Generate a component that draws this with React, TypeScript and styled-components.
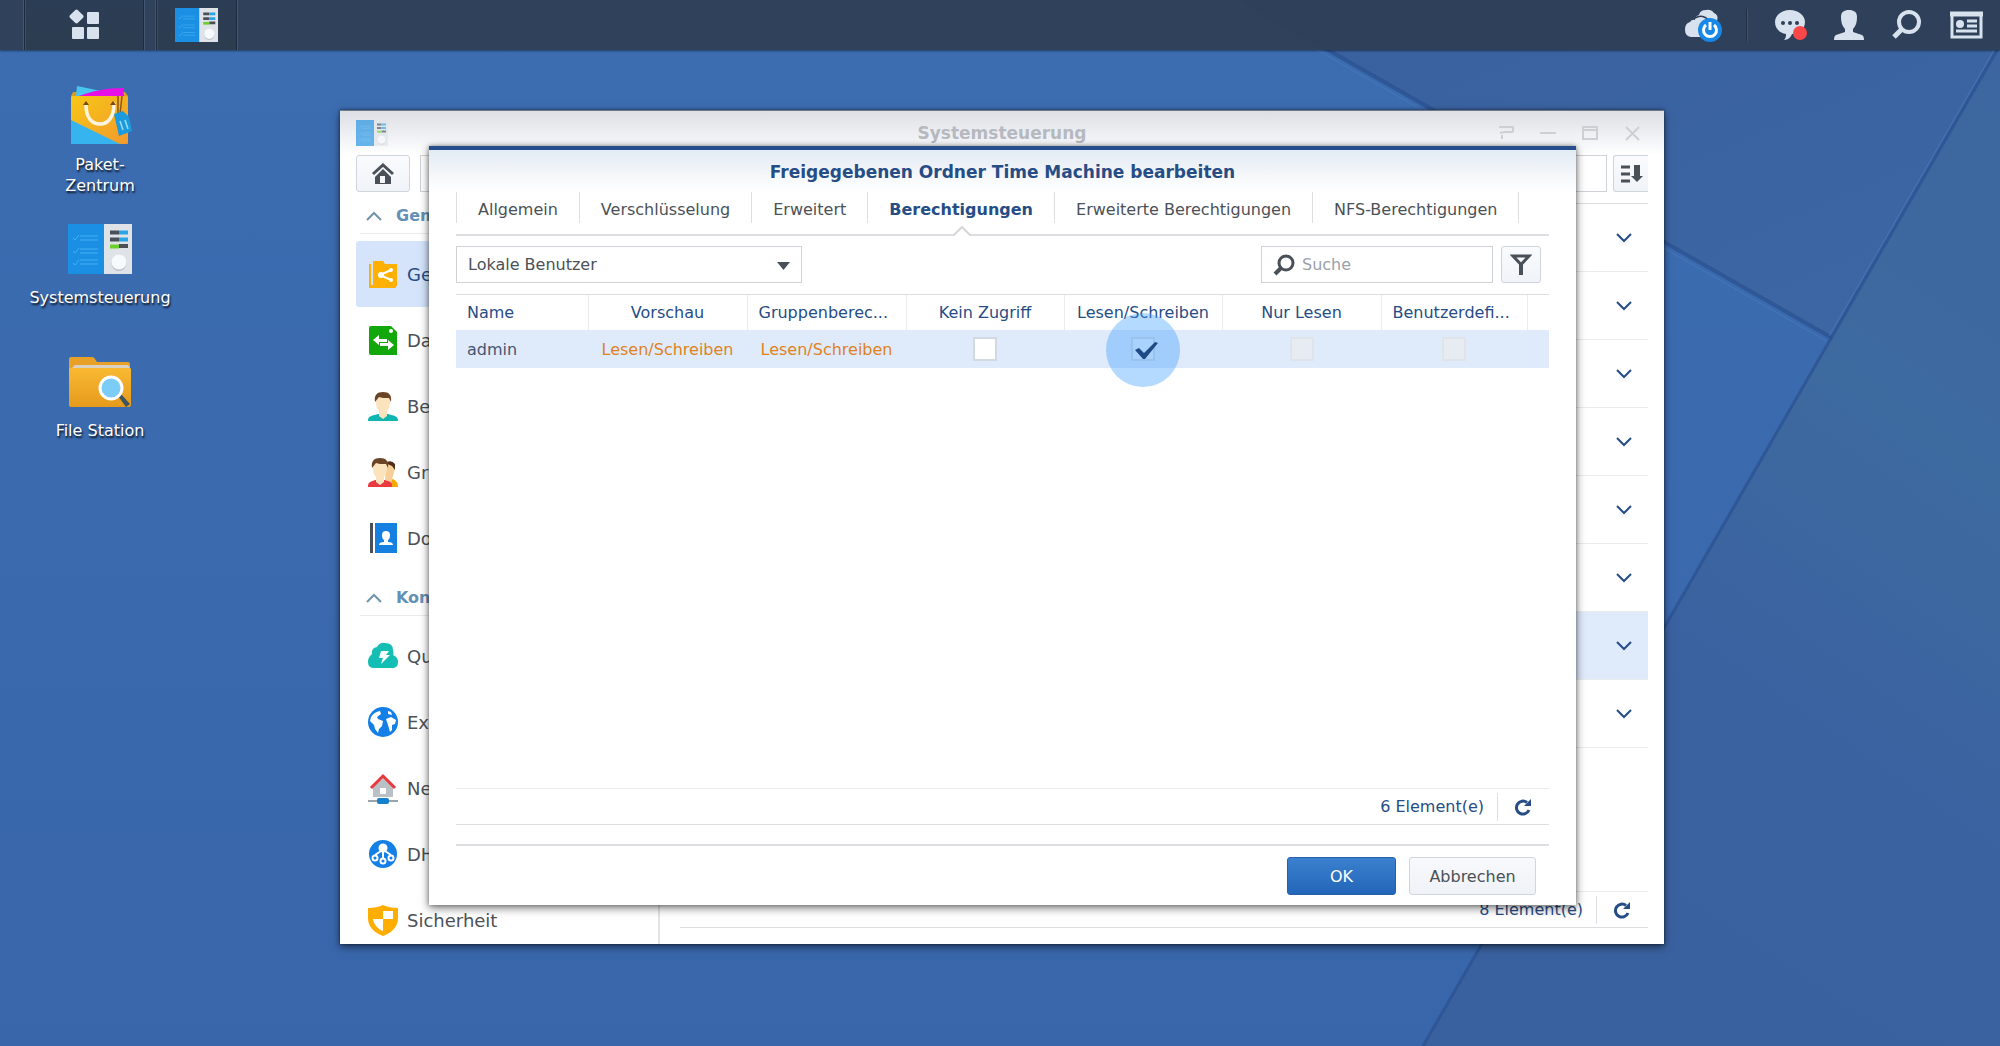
import React from "react";
import styled, { createGlobalStyle, css } from "styled-components";

const color = {
  navy: "#264d85",
  text: "#4b5157",
  line: "#dcdee1",
  softLine: "#e9ebee",
  select: "#dfeafb",
  orange: "#e0821e",
  ink: "#4a5058",
  tray: "#d8e1ee",
};

const GlobalStyle = createGlobalStyle`
  * { box-sizing: border-box; }
  html, body, #root { height: 100%; }
  body {
    margin: 0;
    overflow: hidden;
    font: 16px/21px "DejaVu Sans", Verdana, sans-serif;
    color: ${color.text};
  }
  button, input, select { font: inherit; color: inherit; margin: 0; }
  ul { list-style: none; margin: 0; padding: 0; }
  h1, h2, h3 { margin: 0; font-size: inherit; }
  svg { display: block; flex: none; }
`;

/* ---------- desktop ---------- */

const Desktop = styled.div`
  position: relative;
  display: flex;
  flex-direction: column;
  height: 100%;
  min-height: 800px;
  overflow: hidden;
  background: #3b6bb0;
`;

const WallpaperSvg = styled.svg`
  position: absolute;
  inset: 0;
  width: 100%;
  height: 100%;
`;

const Taskbar = styled.header`
  position: relative;
  display: flex;
  justify-content: space-between;
  height: 50px;
  background: rgba(46, 64, 88, 0.97);
  box-shadow: 0 1px 2px rgba(0, 0, 0, 0.45);
`;

const TaskGroup = styled.div`
  display: flex;
  gap: 12px;
  padding-left: 24px;
`;

const TaskButton = styled.button<{ $width: number }>`
  display: flex;
  align-items: center;
  justify-content: center;
  width: ${(p) => p.$width}px;
  padding: 0;
  border: solid #1c2b3d;
  border-width: 0 1px;
  background: linear-gradient(#2b3d55, #2d3d50);
  box-shadow: -1px 0 0 #42566f, 1px 0 0 #42566f, inset 1px 0 0 #3a4d66;
`;

const Tray = styled.div`
  display: flex;
  align-items: center;
  gap: 27px;
  padding-right: 17px;
`;

const TrayButton = styled.button`
  display: flex;
  align-items: center;
  padding: 0;
  border: 0;
  background: none;
`;

const TrayDivider = styled.span`
  width: 2px;
  height: 32px;
  border-left: 1px solid #1f2e42;
  border-right: 1px solid #42566f;
  margin-left: -4px;
`;

const Shortcuts = styled.nav`
  position: relative;
  display: grid;
  grid-auto-rows: 133px;
  width: 200px;
  padding-top: 34px;
`;

const Shortcut = styled.a`
  display: flex;
  flex-direction: column;
  align-items: center;
  gap: 6px;
  color: #fff;
  text-align: center;
  text-decoration: none;
  text-shadow: 1px 2px 2px rgba(0, 0, 0, 0.85);
`;

const ShortcutIcon = styled.span`
  display: flex;
  align-items: center;
  height: 64px;
`;

const ShortcutLabel = styled.span`
  white-space: pre-line;
`;

/* ---------- control panel window ---------- */

const Window = styled.main`
  position: absolute;
  top: 110px;
  bottom: 102px;
  left: 17%;
  width: 66.2%;
  min-width: 1250px;
  display: flex;
  flex-direction: column;
  background: #fff;
  border-top: 1px solid #70798a;
  box-shadow: 0 3px 8px rgba(0, 0, 0, 0.5), 0 0 3px rgba(0, 0, 0, 0.5);
`;

const TitleBar = styled.div`
  display: grid;
  grid-template-columns: 1fr auto 1fr;
  align-items: center;
  height: 44px;
  padding: 0 16px;
  background: linear-gradient(#dddfe4, #f1f2f6 60%, #fff);
`;

const WindowTitle = styled.h1`
  font-size: 17px;
  color: #b6b9bf;
`;

const WindowControls = styled.div`
  display: flex;
  justify-content: flex-end;
  gap: 22px;
  padding-right: 6px;
`;

const PlainButton = styled.button`
  display: flex;
  align-items: center;
  justify-content: center;
  padding: 0;
  border: 0;
  background: none;
`;

const WindowToolbar = styled.div`
  display: flex;
  height: 37px;
  padding: 0 16px;
`;

const toolButton = css`
  display: flex;
  align-items: center;
  justify-content: center;
  padding: 0;
  border: 1px solid #cfd5dd;
  border-radius: 3px;
  background: linear-gradient(#fafbfd, #f0f3f8);
`;

const HomeButton = styled.button`
  ${toolButton}
  width: 54px;
  margin-right: 10px;
`;

const SortButton = styled.button`
  ${toolButton}
  width: 35px;
  margin-left: 6px;
  border-right: 0;
  border-radius: 3px 0 0 3px;
`;

const WideSearch = styled.input`
  flex: 1;
  min-width: 0;
  padding: 0 12px;
  border: 1px solid #cfd2d7;
  background: #fff;
`;

const WindowBody = styled.div`
  display: grid;
  grid-template-columns: 304px 1fr;
  flex: 1;
  min-height: 0;
  margin-top: 6px;
  padding: 0 16px;
`;

const Sidebar = styled.nav`
  overflow: hidden;
  border-right: 2px solid #e2e3e6;
`;

const SideGroup = styled.section`
  margin-bottom: 9px;
`;

const SideHeading = styled.h2`
  display: flex;
  align-items: center;
  gap: 14px;
  height: 36px;
  margin: 0 12px 7px 4px;
  padding-left: 6px;
  border-bottom: 1px solid ${color.softLine};
  color: #6391b5;
`;

const SideLink = styled.a<{ $active?: boolean }>`
  display: flex;
  align-items: center;
  gap: 8px;
  height: 66px;
  padding-left: 11px;
  border-radius: 3px;
  font-size: 18px;
  text-decoration: none;
  color: ${(p) => (p.$active ? color.navy : color.text)};
  background: ${(p) => (p.$active ? "#d5e4fa" : "none")};
`;

const FolderPane = styled.section`
  display: flex;
  flex-direction: column;
  margin-left: 20px;
  padding: 5px 0 16px;
`;

const FolderList = styled.ul`
  flex: 1;
  border-top: 1px solid ${color.line};
`;

const FolderRow = styled.li<{ $active?: boolean }>`
  display: flex;
  align-items: center;
  justify-content: flex-end;
  height: 68px;
  padding-right: 16px;
  border-bottom: 1px solid ${color.softLine};
  background: ${(p) => (p.$active ? color.select : "none")};
`;

const StatusBar = styled.footer<{ $inset: number }>`
  display: flex;
  align-items: center;
  justify-content: flex-end;
  height: 37px;
  padding-right: ${(p) => p.$inset}px;
  border-top: 1px solid ${color.softLine};
  border-bottom: 1px solid ${color.line};
  color: ${color.navy};
`;

const StatusDivider = styled.span`
  width: 1px;
  height: 28px;
  margin: 0 16px 0 13px;
  background: ${color.line};
`;

/* ---------- dialog ---------- */

const Dialog = styled.section`
  position: absolute;
  inset: 35px 88px 39px 89px;
  display: flex;
  flex-direction: column;
  padding: 0 27px 10px;
  border-top: 4px solid #264e8c;
  background: linear-gradient(#e2ebf5, #f4f6f9 24px, #fff 42px);
  box-shadow: 0 3px 9px rgba(0, 0, 0, 0.5), 0 0 4px rgba(0, 0, 0, 0.35);
`;

const DialogTitle = styled.h2`
  height: 42px;
  font-size: 17px;
  line-height: 44px;
  text-align: center;
  color: ${color.navy};
`;

const Tabs = styled.div`
  display: flex;
  padding-bottom: 11px;
  border-bottom: 2px solid ${color.line};
`;

const Tab = styled.button<{ $active?: boolean }>`
  position: relative;
  height: 31px;
  padding: 3px 21px 0;
  border: 0;
  border-right: 1px solid ${color.line};
  background: none;
  white-space: nowrap;
  &:first-child { border-left: 1px solid ${color.line}; }
  ${(p) =>
    p.$active &&
    css`
      font-weight: bold;
      color: ${color.navy};
    `}
`;

const TabNotch = styled.svg`
  position: absolute;
  left: 50%;
  bottom: -13px;
  margin-left: -8px;
`;

const FilterBar = styled.div`
  display: flex;
  gap: 8px;
  margin: 10px 0 11px;
  padding-right: 8px;
`;

const SelectBox = styled.label`
  position: relative;
  width: 346px;
  margin-right: auto;
`;

const Select = styled.select`
  appearance: none;
  width: 100%;
  height: 37px;
  padding: 0 36px 0 11px;
  border: 1px solid #cfd2d7;
  border-radius: 0;
  background: #fff;
`;

const SelectArrow = styled.svg`
  position: absolute;
  right: 12px;
  top: 16px;
  pointer-events: none;
`;

const SearchBox = styled.label`
  display: flex;
  align-items: center;
  gap: 7px;
  width: 232px;
  height: 37px;
  padding: 0 12px 0 11px;
  border: 1px solid #cfd2d7;
  background: #fff;
`;

const SearchInput = styled.input`
  flex: 1;
  min-width: 0;
  padding: 0;
  border: 0;
  outline: 0;
  background: none;
  &::placeholder { color: #9ba1a8; opacity: 1; }
`;

const FilterButton = styled.button`
  ${toolButton}
  width: 40px;
`;

const TableArea = styled.div`
  flex: 1;
  border-top: 1px solid ${color.line};
`;

const Table = styled.table`
  width: 100%;
  table-layout: fixed;
  border-collapse: collapse;
`;

const HeadCell = styled.th<{ $align?: "left" | "center" }>`
  height: 35px;
  padding: 0 11px;
  border-right: 1px solid ${color.softLine};
  font-weight: normal;
  white-space: nowrap;
  text-align: ${(p) => p.$align ?? "center"};
  color: ${color.navy};
  &:last-child { border-right: 0; }
`;

const Cell = styled.td<{ $align?: "left" | "center"; $accent?: boolean }>`
  height: 38px;
  padding: 0 11px;
  white-space: nowrap;
  text-align: ${(p) => p.$align ?? "center"};
  color: ${(p) => (p.$accent ? color.orange : "#46566f")};
  background: ${color.select};
`;

const CheckHolder = styled.label`
  position: relative;
  display: inline-flex;
  vertical-align: middle;
`;

const Checkbox = styled.input`
  appearance: none;
  width: 24px;
  height: 24px;
  border: 2px solid #d3d9e2;
  background: #fff;
  &:checked { background: #edf4fd; }
  &:disabled {
    border-color: #dfe4ea;
    background: #e7ebf2;
  }
`;

const CheckMark = styled.svg`
  position: absolute;
  left: 2px;
  top: 2px;
`;

const ClickHalo = styled.span`
  position: absolute;
  inset: -24px -25px -26px;
  border-radius: 50%;
  background: rgba(58, 158, 255, 0.38);
  pointer-events: none;
`;

const DialogActions = styled.div`
  display: flex;
  justify-content: flex-end;
  gap: 13px;
  margin-top: 19px;
  padding: 11px 13px 0 0;
  border-top: 2px solid ${color.line};
`;

const ActionButton = styled.button<{ $primary?: boolean }>`
  height: 38px;
  padding: 1px 0 0;
  border-radius: 3px;
  border: 1px solid #d0d6df;
  width: 127px;
  background: linear-gradient(#f8f9fc, #eff2f7);
  ${(p) =>
    p.$primary &&
    css`
      width: 109px;
      border-color: #2560ad;
      background: linear-gradient(#3b81cf, #2365b8);
      color: #fff;
    `}
`;

/* ---------- drawings ---------- */

const Wallpaper = () => (
  <WallpaperSvg viewBox="0 0 2000 1046" preserveAspectRatio="xMaxYMin slice" aria-hidden="true">
    <defs>
      <linearGradient id="wpBase" x1="0" y1="0" x2="0" y2="1">
        <stop offset="0" stopColor="#3c6db1" />
        <stop offset="1" stopColor="#3966ab" />
      </linearGradient>
      <linearGradient id="wpTop" x1="0" y1="0" x2="1" y2="1">
        <stop offset="0" stopColor="#39609f" />
        <stop offset="1" stopColor="#3c68a4" />
      </linearGradient>
      <linearGradient id="wpRight" x1="0.8" y1="0" x2="0.4" y2="1">
        <stop offset="0" stopColor="#3c669f" />
        <stop offset="0.35" stopColor="#3d6a9f" />
        <stop offset="0.65" stopColor="#3a62a0" />
        <stop offset="1" stopColor="#3a619f" />
      </linearGradient>
    </defs>
    <rect width="2000" height="1046" fill="url(#wpBase)" />
    <path d="M1240 0L1832 338L2026 0Z" fill="url(#wpTop)" />
    <path d="M2026 0L1423 1046H2000V0Z" fill="url(#wpRight)" />
    <path d="M1244 2L1832 338" stroke="#2a5090" strokeWidth="4" opacity=".7" />
    <path d="M1240 6L1828 342" stroke="#4f7fc0" strokeWidth="1" opacity=".6" />
    <path d="M2026 0L1423 1046" stroke="#2a5090" strokeWidth="3" opacity=".7" />
    <path d="M2023 0L1829 336" stroke="#4c7abb" strokeWidth="1" opacity=".8" />
  </WallpaperSvg>
);

const MenuIcon = () => (
  <svg width="32" height="32" viewBox="0 0 32 32" fill={color.tray}>
    <rect x="3" y="2" width="11" height="11" rx="2" transform="rotate(45 8.500 7.500)" />
    <rect x="19" y="3" width="12" height="12" rx="1" />
    <rect x="4" y="18" width="12" height="12" rx="1" />
    <rect x="19" y="18" width="12" height="12" rx="1" />
  </svg>
);

const PanelIcon = ({ width, height, faded }: { width: number; height: number; faded?: boolean }) => (
  <svg width={width} height={height} viewBox="0 0 64 50" preserveAspectRatio="none" opacity={faded ? 0.65 : 1}>
    <rect width="36" height="50" fill="#1a8fe3" />
    <rect x="36" width="28" height="50" fill="#dfe3e8" />
    <g stroke="#45b0f2" strokeWidth="1" fill="none">
      <path d="M5 14l2 2 4-5M12 12h18M12 16h18M5 27l2 2 4-5M12 25h18M12 29h18M5 39l2 2 4-5M12 36h18M12 40h18" />
    </g>
    <g strokeWidth="4">
      <path d="M42 8.500h9M42 15.500h9M51 22h9" stroke="#4a5058" />
      <path d="M51 8.500h9M51 15.500h9" stroke="#27a5e5" />
      <path d="M42 22.500h9" stroke="#6ccf2b" />
    </g>
    <circle cx="51" cy="39.500" r="7.500" fill="#b9c0c8" />
    <circle cx="51" cy="38" r="7.500" fill="#f6fafc" />
  </svg>
);

const PackageIcon = () => (
  <svg width="64" height="62" viewBox="0 0 64 62">
    <defs>
      <linearGradient id="bag" x1="0" y1="0" x2="1" y2="1">
        <stop offset="0" stopColor="#f6c715" />
        <stop offset="1" stopColor="#f39a2d" />
      </linearGradient>
      <clipPath id="bagClip"><rect x="3" y="11" width="57" height="48" rx="1" /></clipPath>
    </defs>
    <path d="M3 11L5 7h52l3 4z" fill="#d79b22" />
    <path d="M8 11L9 1l34 7 2 4H9z" fill="#49c6ee" />
    <path d="M11 11C24 6 38 3 55 3l1 8z" fill="#e60fe6" />
    <rect x="3" y="11" width="57" height="48" rx="1" fill="url(#bag)" />
    <g clipPath="url(#bagClip)"><path d="M3 35L52 59H3z" fill="#36b4ef" /></g>
    <path d="M18 20c0 13 6 19 14 19s14-7 14-20" fill="none" stroke="#fdf4df" strokeWidth="3.500" strokeLinecap="round" />
    <path d="M15 20l3-4 3 4zM42 20l3-4 3 4z" fill="#7a4a10" />
    <path d="M50 11v18M54 11l-2 18" stroke="#8a5a16" strokeWidth="1.500" />
    <path d="M46 29l9-3 6 6 3 14-13 5z" fill="#1b9bdd" />
    <path d="M52 36l3 9M57 35l3 9" stroke="#9ddcf7" strokeWidth="1.500" />
  </svg>
);

const FileStationIcon = () => (
  <svg width="64" height="52" viewBox="0 0 64 52">
    <defs>
      <linearGradient id="folder" x1="0" y1="0" x2="0" y2="1">
        <stop offset="0" stopColor="#f9b932" />
        <stop offset="1" stopColor="#e59a1c" />
      </linearGradient>
    </defs>
    <path d="M1 3q0-2 2-2h21q2 0 3 2l2 3h31q2 0 2 2v12H1z" fill="#e8a027" />
    <path d="M4 12l3-3h53l2 3v5H4z" fill="#d9d2c4" />
    <path d="M1 13q0-1 2-1h58q2 0 2 1v36q0 2-2 2H3q-2 0-2-2z" fill="url(#folder)" />
    <path d="M50 40l3-2 9 10-4 3z" fill="#3d5560" />
    <circle cx="43" cy="32" r="11" fill="#7cccf8" stroke="#fff" strokeWidth="3" />
  </svg>
);

const CloudPowerIcon = () => (
  <svg width="38" height="36" viewBox="0 0 38 36">
    <path d="M10 13q0-4 4-5 1-5 7-5 5-1 8 3 5 2 3 8l3 16H6q-6-1-6-7 0-7 5-8 2-3 5-2z" fill={color.tray} />
    <path d="M10 11c5-3 11-2 14 3" stroke="#2e3e54" strokeWidth="1.500" fill="none" />
    <circle cx="25" cy="23" r="12" fill="#1787e8" />
    <path d="M21 18a6.500 6.500 0 1 0 8 0M25 15v8" stroke="#fff" strokeWidth="3" fill="none" />
  </svg>
);

const ChatIcon = () => (
  <svg width="32" height="32" viewBox="0 0 32 32">
    <path d="M15 1c8 0 15 5 15 12s-6 12-13 12c-1 3-4 6-8 6 2-2 2-4 2-6C4 24 0 19 0 13 0 6 7 1 15 1z" fill={color.tray} />
    <g fill="#2e3e54"><circle cx="8" cy="14" r="2" /><circle cx="15" cy="14" r="2" /><circle cx="22" cy="14" r="2" /></g>
    <circle cx="25" cy="24" r="7" fill="#fb4747" />
  </svg>
);

const UserIcon = () => (
  <svg width="30" height="32" viewBox="0 0 30 32" fill={color.tray}>
    <path d="M7 8c0-5 3-7 8-7s8 2 8 7c0 5-1 9-4 12v3l9 3q2 1 2 5H0q0-4 2-5l9-3v-3C8 17 7 13 7 8z" />
  </svg>
);

const TraySearchIcon = () => (
  <svg width="32" height="32" viewBox="0 0 32 32" fill="none" stroke={color.tray}>
    <circle cx="18" cy="13" r="10" strokeWidth="4" />
    <path d="M11 20l-8 8" strokeWidth="5" />
  </svg>
);

const WidgetIcon = () => (
  <svg width="33" height="28" viewBox="0 0 33 28" fill="none" stroke={color.tray}>
    <path d="M2 3v23h29V3" strokeWidth="3" />
    <path d="M0 3h33" strokeWidth="5" />
    <circle cx="10" cy="13" r="4" fill={color.tray} stroke="none" />
    <path d="M17 10h10M17 15h10M6 20h21" strokeWidth="3" />
  </svg>
);

const HomeIcon = () => (
  <svg width="24" height="24" viewBox="0 0 24 24">
    <path d="M2 12L12 3l10 9" fill="none" stroke={color.ink} strokeWidth="3" />
    <path d="M4 15l8-8 8 8v7H4z" fill={color.ink} />
    <path d="M9 14h5v7H9z" fill="#f5f7fa" />
  </svg>
);

const SortIcon = () => (
  <svg width="24" height="20" viewBox="0 0 24 20" fill="none" stroke={color.ink}>
    <path d="M2 3h9M2 10h9M2 17h9" strokeWidth="3" />
    <path d="M18 1v11" strokeWidth="6" />
    <path d="M12 12h12l-6 6z" fill={color.ink} stroke="none" />
  </svg>
);

const ControlIcon = ({ d }: { d: string }) => (
  <svg width="20" height="20" viewBox="0 0 20 20" fill="none" stroke="#cdcfd4" strokeWidth="2">
    <path d={d} />
  </svg>
);

const Chevron = ({ up }: { up?: boolean }) => (
  <svg width="16" height="10" viewBox="0 0 16 10" fill="none" stroke={up ? "#7393aa" : color.navy} strokeWidth="2">
    <path d={up ? "M1 9l7-7 7 7" : "M1 1l7 7 7-7"} />
  </svg>
);

const FilterIcon = () => (
  <svg width="22" height="24" viewBox="0 0 22 24" fill="none" stroke={color.ink} strokeWidth="3">
    <path d="M3 3h16l-8 8.500z" />
    <path d="M11 10v12" strokeWidth="4" />
  </svg>
);

const SearchIcon = () => (
  <svg width="22" height="22" viewBox="0 0 22 22" fill="none" stroke={color.ink}>
    <circle cx="13" cy="9" r="7" strokeWidth="3" />
    <path d="M8 14l-6 6" strokeWidth="4" />
  </svg>
);

const RefreshIcon = () => (
  <svg width="18" height="18" viewBox="0 0 18 18">
    <path d="M13 4.500A6.500 6.500 0 1 0 15 12" fill="none" stroke={color.navy} strokeWidth="3" />
    <path d="M17 1v7h-7z" fill={color.navy} />
  </svg>
);

const Head = ({ x, hair, skin }: { x: number; hair: string; skin: string }) => (
  <g transform={`translate(${x} 0)`}>
    <path d="M8 6q0-4 7-4t7 4v5c0 4-1 7-3 9v5l-4 3-4-3v-5c-2-2-3-5-3-9z" fill={skin} />
    <path d="M7 11C6 4 9 1 15 1s9 3 8 10l-2-4c-4 0-8 0-10-1z" fill={hair} />
  </g>
);

const sideIcons: Record<string, React.ReactNode> = {
  share: (
    <>
      <path d="M1 5h2v21H1zM5 27V2h10l2 3h12v22z" fill="#ffb000" />
      <path d="M1 26h27v3H1z" fill="#ffb000" />
      <path d="M23 11l-11 5 11 5" fill="none" stroke="#fff" strokeWidth="2" />
      <g fill="#fff"><circle cx="13" cy="16" r="3" /><circle cx="23" cy="11" r="2" /><circle cx="23" cy="21" r="2" /></g>
    </>
  ),
  files: (
    <>
      <path d="M3 1h20l6 6v23H3q-2 0-2-2V3q0-2 2-2z" fill="#12a80c" />
      <circle cx="23" cy="6" r="2" fill="#fff" />
      <path d="M5 15l6-5v4h8v3h-8v3zM26 20l-6-5v3h-8v3h8v4z" fill="#fff" />
    </>
  ),
  user: (
    <>
      <path d="M0 30c0-5 3-5 10-7h10c7 2 10 2 10 7z" fill="#10b5b0" />
      <Head x={0} hair="#6b4428" skin="#fbe3bd" />
    </>
  ),
  group: (
    <>
      <path d="M20 30l4-8c4 1 6 4 6 8z" fill="#f5a800" />
      <path d="M18 6q4-3 8 0l1 6-4 14-6-3z" fill="#f6cf98" />
      <path d="M17 6q6-4 10 1v6l-3-4z" fill="#4f2f1a" />
      <path d="M0 30c0-5 2-5 7-7h10c6 2 7 2 7 7z" fill="#e93a3f" />
      <Head x={-3} hair="#6b4428" skin="#fbe3bd" />
    </>
  ),
  book: (
    <>
      <path d="M2 0h3v30H2z" fill="#4a5058" />
      <path d="M7 0h22v30H7z" fill="#1680e0" />
      <path d="M14 12q0-4 4-4t4 4-2 5v2q5 0 5 3H11q0-3 5-3v-2q-2-1-2-5z" fill="#fff" />
    </>
  ),
  cloud: (
    <>
      <path d="M4 13q-1-6 5-7 3-5 8-4 8 0 8 7 1 4 0 5c4 2 5 4 5 7q0 6-6 6H6q-6 0-6-6 0-5 4-8z" fill="#15beb5" />
      <path d="M13 10h8l-3 4h4l-9 9 2-6h-4z" fill="#fff" />
    </>
  ),
  globe: (
    <>
      <circle cx="15" cy="15" r="15" fill="#147fe6" />
      <path d="M3 10q3-5 9-6l1 3-4 3 1 2 5 2-1 5-3 3-1 4-3-4-1-4-4-4zM18 12l5-2 5 3-1 4-3 1v5l-2 2-2-7zM20 4l3 1 1 3-4-1z" fill="#fff" />
    </>
  ),
  network: (
    <>
      <path d="M15 5l10 9v10H5V14z" fill="#bac1c6" />
      <rect x="12" y="15" width="6" height="6" fill="#fff" />
      <path d="M3 15L15 3l12 12" fill="none" stroke="#e8383d" strokeWidth="3" />
      <path d="M0 28h30" stroke="#9aa4ab" strokeWidth="2" />
      <rect x="9" y="25" width="12" height="6" rx="2" fill="#1680d0" />
    </>
  ),
  dhcp: (
    <>
      <circle cx="15" cy="15" r="14" fill="#147fe6" />
      <circle cx="15" cy="9" r="4.500" fill="#fff" />
      <g fill="none" stroke="#fff" strokeWidth="2">
        <path d="M15 12v8M13 12l-6 4M17 12l6 4" />
        <circle cx="7" cy="19" r="2.500" /><circle cx="15" cy="22" r="2.500" /><circle cx="23" cy="19" r="2.500" />
      </g>
    </>
  ),
  shield: (
    <>
      <path d="M0 3q9 0 15-3 6 3 15 3v10c0 8-5 14-15 18C5 27 0 21 0 13z" fill="#ffae00" />
      <path d="M15 6h10v8H15zM5 14h10v12c-5-2-9-6-10-12z" fill="#fff" />
    </>
  ),
};

const SideIcon = ({ name }: { name: string }) => (
  <svg width="32" height="31" viewBox="-1 0 32 31" overflow="visible">{sideIcons[name]}</svg>
);

/* ---------- data ---------- */

const sideGroups = [
  {
    title: "Gemeinsame Nutzung",
    items: [
      ["share", "Gemeinsamer Ordner"],
      ["files", "Dateidienste"],
      ["user", "Benutzer"],
      ["group", "Gruppe"],
      ["book", "Domain/LDAP"],
    ],
  },
  {
    title: "Konnektivität",
    items: [
      ["cloud", "QuickConnect"],
      ["globe", "Externer Zugriff"],
      ["network", "Netzwerk"],
      ["dhcp", "DHCP Server"],
      ["shield", "Sicherheit"],
    ],
  },
];

const controls = [
  ["Hilfe", "M3 4h14M17 3v6M8 9h9M4 10l5-1M6 12v4"],
  ["Minimieren", "M2 10h16"],
  ["Maximieren", "M3 4h14v12H3zM3 7h14"],
  ["Schließen", "M4 4l13 13M17 4L4 17"],
];

const tabs = ["Allgemein", "Verschlüsselung", "Erweitert", "Berechtigungen", "Erweiterte Berechtigungen", "NFS-Berechtigungen"];
const activeTab = "Berechtigungen";
const columns = [132, 159, 159, 158, 158, 159, 146];
const folderRows = [0, 1, 2, 3, 4, 5, 6, 7];
const openFolder = 6;

const Status = ({ count, inset }: { count: number; inset: number }) => (
  <StatusBar $inset={inset}>
    {count} Element(e)
    <StatusDivider />
    <PlainButton type="button" aria-label="Aktualisieren"><RefreshIcon /></PlainButton>
  </StatusBar>
);

const PermissionDialog = () => (
  <Dialog role="dialog" aria-labelledby="dialog-title">
    <DialogTitle id="dialog-title">Freigegebenen Ordner Time Machine bearbeiten</DialogTitle>
    <Tabs role="tablist">
      {tabs.map((t) => (
        <Tab key={t} type="button" role="tab" aria-selected={t === activeTab} $active={t === activeTab}>
          {t}
          {t === activeTab && (
            <TabNotch width="18" height="10" viewBox="0 0 18 10" aria-hidden="true">
              <path d="M0 10L9 1l9 9z" fill="#fff" />
              <path d="M0 9l1 0L9 1l8 8h1" fill="none" stroke="#d4d7da" strokeWidth="2" />
            </TabNotch>
          )}
        </Tab>
      ))}
    </Tabs>
    <FilterBar>
      <SelectBox>
        <Select aria-label="Benutzertyp" defaultValue="local">
          <option value="local">Lokale Benutzer</option>
        </Select>
        <SelectArrow width="13" height="8" viewBox="0 0 13 8" aria-hidden="true"><path d="M0 0h13L6.500 8z" fill={color.ink} /></SelectArrow>
      </SelectBox>
      <SearchBox>
        <SearchIcon />
        <SearchInput type="text" placeholder="Suche" aria-label="Suche" />
      </SearchBox>
      <FilterButton type="button" aria-label="Filter"><FilterIcon /></FilterButton>
    </FilterBar>
    <TableArea>
      <Table>
        <colgroup>
          {columns.map((w, i) => <col key={i} width={w} />)}
          <col />
        </colgroup>
        <thead>
          <tr>
            <HeadCell $align="left">Name</HeadCell>
            <HeadCell>Vorschau</HeadCell>
            <HeadCell $align="left">Gruppenberec...</HeadCell>
            <HeadCell>Kein Zugriff</HeadCell>
            <HeadCell>Lesen/Schreiben</HeadCell>
            <HeadCell>Nur Lesen</HeadCell>
            <HeadCell $align="left">Benutzerdefi...</HeadCell>
            <HeadCell />
          </tr>
        </thead>
        <tbody>
          <tr>
            <Cell $align="left">admin</Cell>
            <Cell $accent>Lesen/Schreiben</Cell>
            <Cell $accent>Lesen/Schreiben</Cell>
            <Cell><CheckHolder><Checkbox type="checkbox" aria-label="Kein Zugriff" /></CheckHolder></Cell>
            <Cell>
              <CheckHolder>
                <Checkbox type="checkbox" aria-label="Lesen/Schreiben" defaultChecked />
                <ClickHalo />
                <CheckMark width="26" height="22" viewBox="0 0 26 22" aria-hidden="true">
                  <path d="M2 11l4-2 5 5L22 3l3 1L12 20h-2z" fill="#204a85" />
                </CheckMark>
              </CheckHolder>
            </Cell>
            <Cell><CheckHolder><Checkbox type="checkbox" aria-label="Nur Lesen" disabled /></CheckHolder></Cell>
            <Cell><CheckHolder><Checkbox type="checkbox" aria-label="Benutzerdefiniert" disabled /></CheckHolder></Cell>
            <Cell />
          </tr>
        </tbody>
      </Table>
    </TableArea>
    <Status count={6} inset={17} />
    <DialogActions>
      <ActionButton type="button" $primary>OK</ActionButton>
      <ActionButton type="button">Abbrechen</ActionButton>
    </DialogActions>
  </Dialog>
);

export default function App() {
  return (
    <Desktop>
      <GlobalStyle />
      <Wallpaper />
      <Taskbar>
        <TaskGroup>
          <TaskButton type="button" $width={120} aria-label="Hauptmenü"><MenuIcon /></TaskButton>
          <TaskButton type="button" $width={81} aria-label="Systemsteuerung"><PanelIcon width={43} height={34} /></TaskButton>
        </TaskGroup>
        <Tray>
          <TrayButton type="button" aria-label="Cloud"><CloudPowerIcon /></TrayButton>
          <TrayDivider />
          <TrayButton type="button" aria-label="Benachrichtigungen"><ChatIcon /></TrayButton>
          <TrayButton type="button" aria-label="Optionen"><UserIcon /></TrayButton>
          <TrayButton type="button" aria-label="Suchen"><TraySearchIcon /></TrayButton>
          <TrayButton type="button" aria-label="Widgets"><WidgetIcon /></TrayButton>
        </Tray>
      </Taskbar>

      <Shortcuts>
        <Shortcut href="#paket">
          <ShortcutIcon><PackageIcon /></ShortcutIcon>
          <ShortcutLabel>{"Paket-\nZentrum"}</ShortcutLabel>
        </Shortcut>
        <Shortcut href="#system">
          <ShortcutIcon><PanelIcon width={64} height={50} /></ShortcutIcon>
          <ShortcutLabel>Systemsteuerung</ShortcutLabel>
        </Shortcut>
        <Shortcut href="#files">
          <ShortcutIcon><FileStationIcon /></ShortcutIcon>
          <ShortcutLabel>File Station</ShortcutLabel>
        </Shortcut>
      </Shortcuts>

      <Window>
        <TitleBar>
          <PanelIcon width={32} height={26} faded />
          <WindowTitle>Systemsteuerung</WindowTitle>
          <WindowControls>
            {controls.map(([label, d]) => (
              <PlainButton key={label} type="button" aria-label={label}><ControlIcon d={d} /></PlainButton>
            ))}
          </WindowControls>
        </TitleBar>
        <WindowToolbar>
          <HomeButton type="button" aria-label="Startseite"><HomeIcon /></HomeButton>
          <WideSearch type="text" aria-label="Systemsteuerung durchsuchen" />
          <SortButton type="button" aria-label="Sortieren"><SortIcon /></SortButton>
        </WindowToolbar>
        <WindowBody>
          <Sidebar>
            {sideGroups.map((g, gi) => (
              <SideGroup key={g.title}>
                <SideHeading><Chevron up />{g.title}</SideHeading>
                {g.items.map(([icon, label], i) => (
                  <SideLink key={label} href={`#${icon}`} $active={gi === 0 && i === 0}>
                    <SideIcon name={icon} />
                    {label}
                  </SideLink>
                ))}
              </SideGroup>
            ))}
          </Sidebar>
          <FolderPane>
            <FolderList>
              {folderRows.map((r) => (
                <FolderRow key={r} $active={r === openFolder}>
                  <PlainButton type="button" aria-label="Ordnerdetails"><Chevron /></PlainButton>
                </FolderRow>
              ))}
            </FolderList>
            <Status count={8} inset={17} />
          </FolderPane>
        </WindowBody>
        <PermissionDialog />
      </Window>
    </Desktop>
  );
}
